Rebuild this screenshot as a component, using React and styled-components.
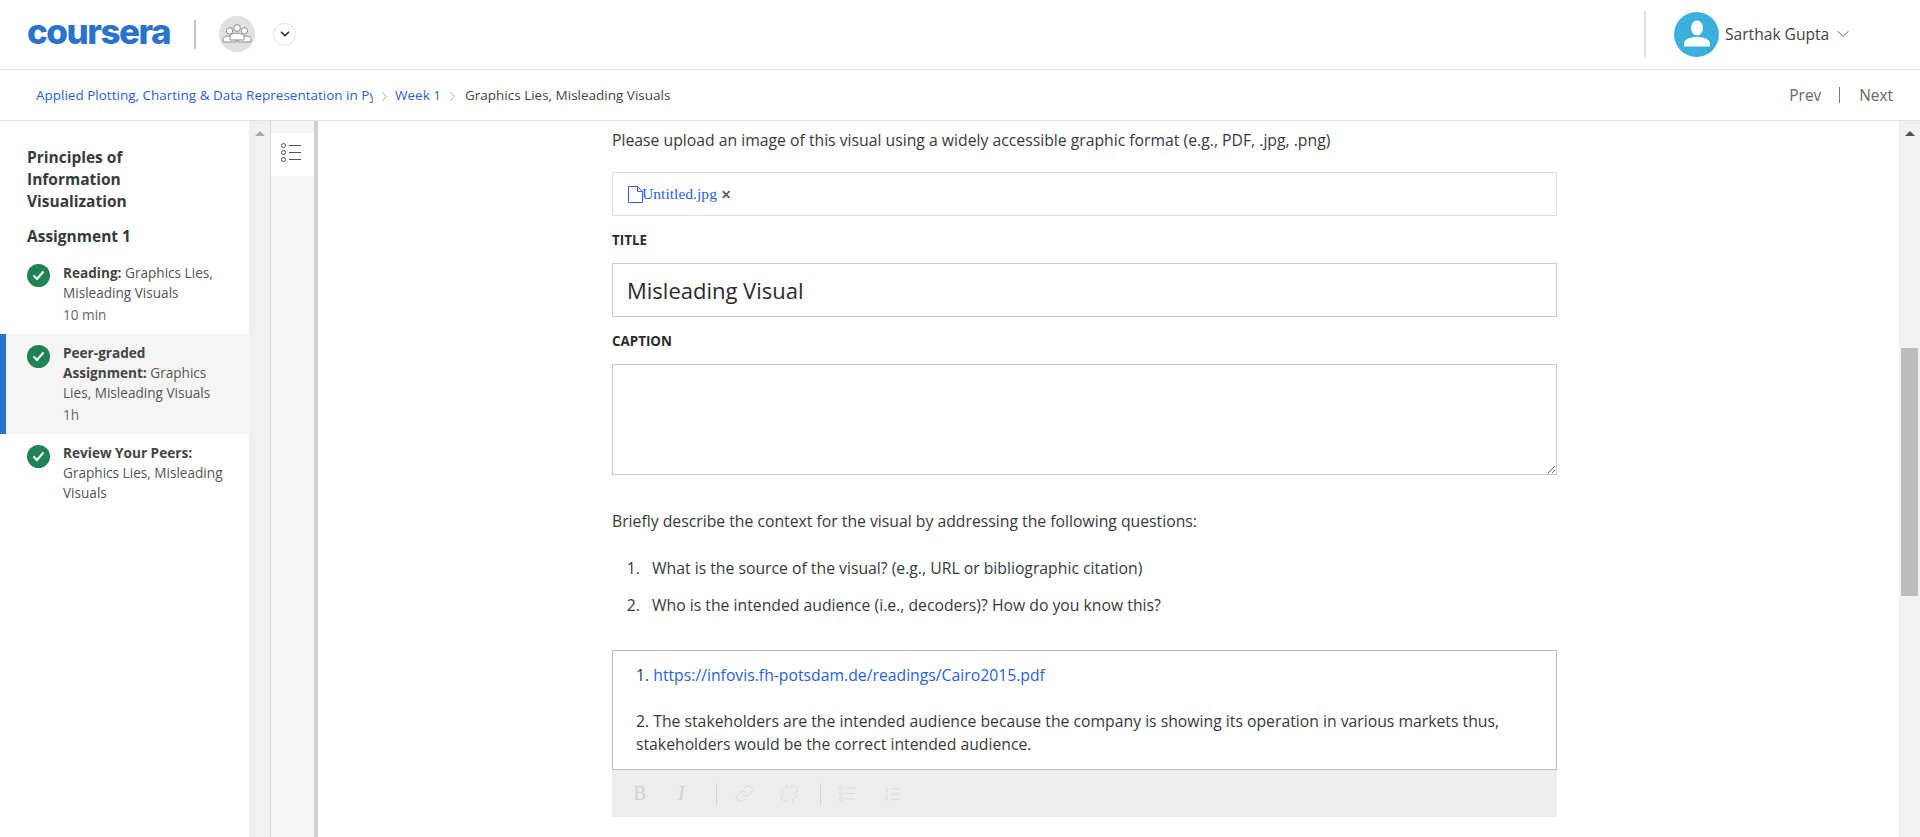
import React from "react";
import styled, { createGlobalStyle } from "styled-components";
import { Link as LinkIcon, Unlink, ListOrdered, ChevronDown, ChevronRight } from "lucide-react";

const GlobalStyle = createGlobalStyle`
  html, body {
    margin: 0;
    padding: 0;
    height: 100%;
    overflow: hidden;
    background: #fff;
    font-family: "Open Sans", "Noto Sans", sans-serif;
    color: #333;
  }
  * { box-sizing: border-box; }
`;

const Page = styled.div`
  display: flex;
  flex-direction: column;
  width: 1920px;
  height: 837px;
  overflow: hidden;
`;

const TopBar = styled.header`
  display: flex;
  align-items: center;
  flex: 0 0 70px;
  border-bottom: 1px solid #e1e1e1;
  padding: 0 0 1px 27px;
`;

const Logo = styled.div`
  width: 143px;
  font-family: "Inter", sans-serif;
  font-weight: 800;
  font-size: 35px;
  line-height: 30px;
  letter-spacing: -1.5px;
  color: #2a73cc;
  margin-top: -6px;
`;

const LogoDivider = styled.div`
  width: 2px;
  height: 29px;
  background: #c4c4c4;
  margin: 0 23px 0 24px;
`;

const GroupBadge = styled.div`
  display: flex;
  align-items: center;
  justify-content: center;
  width: 36px;
  height: 36px;
  border-radius: 50%;
  background: #e1e1e1;
`;

const RoundToggle = styled.div`
  display: flex;
  align-items: center;
  justify-content: center;
  width: 23px;
  height: 23px;
  margin-left: 18px;
  border-radius: 50%;
  background: #fff;
  border: 1px solid #e1e1e1;
  color: #333;
`;

const UserArea = styled.div`
  display: flex;
  align-items: center;
  margin-left: auto;
  width: 276px;
  height: 46px;
  border-left: 2px solid #e1e1e1;
  padding-left: 28px;
`;

const Avatar = styled.div`
  display: flex;
  align-items: center;
  justify-content: center;
  width: 45px;
  height: 45px;
  border-radius: 50%;
  background: #3bb0dc;
`;

const UserName = styled.span`
  font-size: 15.6px;
  color: #444;
  margin: 0 4px 0 6px;
`;

const Crumbs = styled.nav`
  display: flex;
  align-items: center;
  flex: 0 0 51px;
  padding: 0 27px 0 36px;
  border-bottom: 1px solid #e1e1e1;
  font-size: 13.5px;
`;

const CrumbLink = styled.a`
  color: #2a5fd8;
  white-space: nowrap;
  overflow: hidden;
  flex: none;
  width: ${(props) => props.$width || "auto"};
`;

const CrumbSep = styled.span`
  display: flex;
  color: #777;
  margin: 2px 3px 0 4px;
`;

const CrumbText = styled.span`
  color: #444;
  font-size: 13.5px;
  margin-left: 2px;
`;

const PagerLink = styled.a`
  font-size: 15.4px;
  color: #666;
`;

const Pager = styled.div`
  display: flex;
  align-items: center;
  margin-left: auto;
`;

const PagerSep = styled.span`
  width: 1px;
  height: 16px;
  background: #777;
  margin: 0 19px 0 18px;
`;

const Body = styled.div`
  display: flex;
  flex: 1;
  min-height: 0;
`;

const Sidebar = styled.aside`
  flex: 0 0 249px;
  padding-top: 25px;
`;

const CourseTitle = styled.h2`
  margin: 0 27px 13px;
  font-size: 15.5px;
  line-height: 22px;
  font-weight: 700;
  color: #373a3c;
`;

const LessonTitle = styled(CourseTitle)`
  margin-bottom: 5px;
`;

const LessonItem = styled.div`
  display: flex;
  gap: 13px;
  height: ${(props) => props.$height}px;
  padding: ${(props) => props.$top}px 18px 0 ${(props) => (props.$active ? "21px" : "27px")};
  background: ${(props) => (props.$active ? "#f5f5f5" : "transparent")};
  border-left: ${(props) => (props.$active ? "6px solid #2a73cc" : "none")};
  font-size: 13.6px;
  line-height: 20px;
  color: #555;
`;

const CheckBadge = styled.div`
  display: flex;
  align-items: center;
  justify-content: center;
  flex: 0 0 23px;
  height: 23px;
  margin-top: ${(props) => props.$offset}px;
  border-radius: 50%;
  background: #1f8354;
`;

const Bold = styled.strong`
  font-weight: 700;
  color: #444;
`;

const Duration = styled.div`
  margin-top: 2px;
  color: #666;
`;

const ScrollTrack = styled.div`
  display: flex;
  flex-direction: column;
  align-items: center;
  flex: 0 0 21px;
  background: #f1f1f1;
  padding: 10px 2px 0;
`;

const ArrowUp = styled.div`
  flex: none;
  width: 0;
  height: 0;
  border-left: 5px solid transparent;
  border-right: 5px solid transparent;
  border-bottom: 5px solid ${(props) => props.$color};
`;

const ScrollThumb = styled.div`
  width: 100%;
  height: 248px;
  margin-top: 212px;
  background: #bcbcbc;
`;

const ToolRail = styled.div`
  flex: 0 0 48px;
  padding-top: 12px;
  background: #f5f5f5;
  border-left: 1px solid #d8d8d8;
  border-right: 4px solid #d0d0d0;
`;

const RailButton = styled.div`
  display: flex;
  align-items: center;
  justify-content: center;
  height: 43px;
  padding: 0 4px 5px 0;
  background: #fff;
`;

const Main = styled.main`
  flex: 1;
  display: flex;
  justify-content: center;
  min-width: 0;
  padding-right: 48px;
`;

const Column = styled.div`
  width: 945px;
  padding-top: 9px;
  font-size: 15.75px;
  color: #373a3c;
`;

const Paragraph = styled.p`
  margin: ${(props) => props.$top || 0}px 0 0;
  line-height: 20px;
`;

const FileBox = styled.div`
  display: flex;
  align-items: center;
  height: 44px;
  margin-top: 22px;
  padding: 0 15px;
  border: 1px solid #dfdfe6;
  font-family: "Liberation Serif", serif;
  font-size: 15.6px;
`;

const FileLink = styled.a`
  color: #2a5fd8;
  margin-left: -1px;
`;

const RemoveMark = styled.span`
  margin-left: 4px;
  font-family: "Open Sans", sans-serif;
  font-size: 18px;
  font-weight: 600;
  line-height: 20px;
  color: #555;
`;

const FieldLabel = styled.div`
  margin-top: ${(props) => props.$top}px;
  font-size: 13.4px;
  line-height: 16px;
  font-weight: 700;
  color: #2b2b2b;
`;

const TextField = styled.input`
  display: block;
  width: 100%;
  height: 54px;
  margin-top: 15px;
  padding: 0 14px;
  border: 1px solid #c8ccd8;
  border-radius: 0;
  outline: none;
  font-family: "Open Sans", sans-serif;
  font-size: 22px;
  color: #2b2b2b;
`;

const TextBox = styled.textarea`
  display: block;
  width: 100%;
  height: 111px;
  margin-top: 15px;
  padding: 10px 14px;
  border: 1px solid #c8ccd8;
  border-radius: 0;
  outline: none;
  resize: vertical;
`;

const Steps = styled.ol`
  margin: 27px 0 0;
  padding: 0 0 0 32px;
`;

const Step = styled.li`
  line-height: 20px;
  margin-bottom: 17px;
  padding-left: 8px;
`;

const EditorBox = styled.div`
  height: 120px;
  margin-top: 35px;
  padding: 13px 24px 0 23px;
  border: 1px solid #bdbdbd;
  line-height: 23px;
`;

const EditorLine = styled.div`
  margin-bottom: ${(props) => props.$gap || 0}px;
`;

const EditorLink = styled.a`
  color: #2a5fd8;
`;

const EditorBar = styled.div`
  display: flex;
  align-items: center;
  height: 47px;
  padding-left: 21px;
  background: #ededed;
  color: #d6d6d6;
`;

const BarLetter = styled.span`
  width: ${(props) => props.$width}px;
  font-family: "DejaVu Serif", serif;
  font-style: ${(props) => (props.$italic ? "italic" : "normal")};
  font-size: 18px;
  color: #d2d2d2;
`;

const BarDivider = styled.span`
  width: 1px;
  height: 22px;
  background: #cfcfcf;
  margin-right: 18px;
`;

const BarIcon = styled.span`
  display: flex;
  margin-right: ${(props) => props.$right}px;
`;

const GroupIcon = () => (
  <svg width="30" height="22" viewBox="0 0 30 22" fill="#fff" stroke="#8c8c8c" strokeWidth="1">
    <circle cx="7.5" cy="8" r="3.2" />
    <path d="M1 19v-3c0-2 3-3 6.5-3s6.5 1 6.5 3v3z" />
    <circle cx="22.5" cy="8" r="3.2" />
    <path d="M16 19v-3c0-2 3-3 6.5-3s6.5 1 6.5 3v3z" />
    <circle cx="15" cy="5" r="3.4" />
    <path d="M8 17v-3.5c0-2 3.2-3.2 7-3.2s7 1.2 7 3.2V17z" />
  </svg>
);

const PersonIcon = () => (
  <svg width="28" height="28" viewBox="0 0 28 28" fill="#fff">
    <ellipse cx="14" cy="8" rx="6" ry="7.5" />
    <path d="M1 26.5v-3c0-4 6-6.5 13-6.5s13 2.500 13 6.500v3z" />
  </svg>
);

const CheckIcon = () => (
  <svg width="13" height="11" viewBox="0 0 13 11" fill="none" stroke="#fff" strokeWidth="2">
    <path d="M1.5 5.5 5 9l6.5-7.5" />
  </svg>
);

// three dots with rules, used by the outline button and the editor's list button
const BulletsIcon = ({ width, height, color }) => (
  <svg width={width} height={height} viewBox="0 0 20 19" fill="none" stroke={color} strokeWidth="1">
    <circle cx="2.5" cy="2.5" r="2" />
    <circle cx="2.5" cy="9.5" r="2" />
    <circle cx="2.5" cy="16.5" r="2" />
    <path d="M8 2.500h12M8 9.500h12M8 16.500h12" />
  </svg>
);

const FileIcon = () => (
  <svg width="15" height="17" viewBox="0 0 15 17" fill="none" stroke="#3b5bff" strokeWidth="1">
    <path d="M0.5 0.5h9l5 5v11h-14z" />
    <path d="M9.5 0.5v5h5" />
  </svg>
);

const Lesson = ({ label, title, duration, active, height, top, offset }) => (
  <LessonItem $active={active} $height={height} $top={top}>
    <CheckBadge $offset={offset}>
      <CheckIcon />
    </CheckBadge>
    <div>
      <Bold>{label}</Bold> {title}
      {duration && <Duration>{duration}</Duration>}
    </div>
  </LessonItem>
);

const App = () => (
  <Page>
    <GlobalStyle />
    <TopBar>
      <Logo>coursera</Logo>
      <LogoDivider />
      <GroupBadge>
        <GroupIcon />
      </GroupBadge>
      <RoundToggle>
        <ChevronDown size={14} strokeWidth={3} />
      </RoundToggle>
      <UserArea>
        <Avatar>
          <PersonIcon />
        </Avatar>
        <UserName>Sarthak Gupta</UserName>
        <ChevronDown size={20} strokeWidth={1} color="#444" />
      </UserArea>
    </TopBar>
    <Crumbs>
      <CrumbLink $width="337px">Applied Plotting, Charting &amp; Data Representation in Python</CrumbLink>
      <CrumbSep>
        <ChevronRight size={15} strokeWidth={1} />
      </CrumbSep>
      <CrumbLink>Week 1</CrumbLink>
      <CrumbSep>
        <ChevronRight size={15} strokeWidth={1} />
      </CrumbSep>
      <CrumbText>Graphics Lies, Misleading Visuals</CrumbText>
      <Pager>
        <PagerLink>Prev</PagerLink>
        <PagerSep />
        <PagerLink>Next</PagerLink>
      </Pager>
    </Crumbs>
    <Body>
      <Sidebar>
        <CourseTitle>
          Principles of
          <br />
          Information
          <br />
          Visualization
        </CourseTitle>
        <LessonTitle>Assignment 1</LessonTitle>
        <Lesson label="Reading:" title="Graphics Lies, Misleading Visuals" duration="10 min" height={82} top={11} offset={1} />
        <Lesson label="Peer-graded Assignment:" title="Graphics Lies, Misleading Visuals" duration="1h" active height={100} top={9} offset={2} />
        <Lesson label="Review Your Peers:" title="Graphics Lies, Misleading Visuals" height={80} top={9} offset={2} />
      </Sidebar>
      <ScrollTrack>
        <ArrowUp $color="#a8a8a8" />
      </ScrollTrack>
      <ToolRail>
        <RailButton>
          <BulletsIcon width={20} height={19} color="#555" />
        </RailButton>
      </ToolRail>
      <Main>
        <Column>
          <Paragraph>Please upload an image of this visual using a widely accessible graphic format (e.g., PDF, .jpg, .png)</Paragraph>
          <FileBox>
            <FileIcon />
            <FileLink>Untitled.jpg</FileLink>
            <RemoveMark>×</RemoveMark>
          </FileBox>
          <FieldLabel $top={16}>TITLE</FieldLabel>
          <TextField defaultValue="Misleading Visual" />
          <FieldLabel $top={16}>CAPTION</FieldLabel>
          <TextBox />
          <Paragraph $top={36}>Briefly describe the context for the visual by addressing the following questions:</Paragraph>
          <Steps>
            <Step>What is the source of the visual? (e.g., URL or bibliographic citation)</Step>
            <Step>Who is the intended audience (i.e., decoders)? How do you know this?</Step>
          </Steps>
          <EditorBox>
            <EditorLine $gap={23}>
              1. <EditorLink>https://infovis.fh-potsdam.de/readings/Cairo2015.pdf</EditorLink>
            </EditorLine>
            <EditorLine>
              2. The stakeholders are the intended audience because the company is showing its operation in various markets thus, stakeholders would be the correct intended audience.
            </EditorLine>
          </EditorBox>
          <EditorBar>
            <BarLetter $width={45}>B</BarLetter>
            <BarLetter $width={38} $italic>I</BarLetter>
            <BarDivider />
            <BarIcon $right={26}>
              <LinkIcon size={19} strokeWidth={1.2} />
            </BarIcon>
            <BarIcon $right={21}>
              <Unlink size={19} strokeWidth={1.2} />
            </BarIcon>
            <BarDivider />
            <BarIcon $right={28}>
              <BulletsIcon width={16} height={15} color="#d6d6d6" />
            </BarIcon>
            <BarIcon $right={0}>
              <ListOrdered size={18} strokeWidth={1.2} />
            </BarIcon>
          </EditorBar>
        </Column>
      </Main>
      <ScrollTrack>
        <ArrowUp $color="#505050" />
        <ScrollThumb />
      </ScrollTrack>
    </Body>
  </Page>
);

export default App;
